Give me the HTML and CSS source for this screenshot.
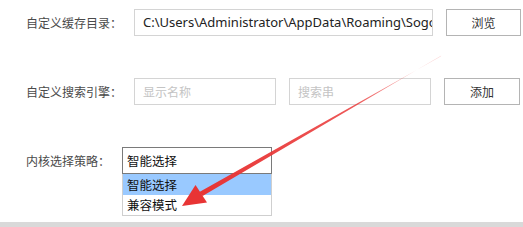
FILE: index.html
```html
<!DOCTYPE html>
<html lang="zh-CN">
<head>
    <meta charset="UTF-8">
    <meta name="viewport" content="width=device-width, initial-scale=1.0">
    <title>高级设置</title>
    <link rel="stylesheet" href="styles.css">
</head>
<body>
    <div class="panel">
        <div class="row row-cache">
            <label class="label label-cache">自定义缓存目录：</label>
            <div class="field field-path">C:\Users\Administrator\AppData\Roaming\Sogou</div>
            <button class="btn">浏览</button>
        </div>

        <div class="row row-search">
            <label class="label label-cache">自定义搜索引擎：</label>
            <div class="field field-half placeholder">显示名称</div>
            <div class="field field-half placeholder">搜索串</div>
            <button class="btn btn-add">添加</button>
        </div>

        <div class="row row-core">
            <label class="label label-core">内核选择策略：</label>
            <div class="select-wrap">
                <div class="select">智能选择</div>
                <ul class="options">
                    <li class="option selected">智能选择</li>
                    <li class="option">兼容模式</li>
                </ul>
            </div>
        </div>
    </div>

    <div class="footer-bar"></div>

    <svg class="arrow" width="523" height="227" viewBox="0 0 523 227">
        <defs>
            <linearGradient id="shaft" x1="441" y1="55" x2="200" y2="195" gradientUnits="userSpaceOnUse">
                <stop offset="0" stop-color="#f05a5a" stop-opacity="0.25"/>
                <stop offset="0.35" stop-color="#ea3b3b" stop-opacity="0.85"/>
                <stop offset="1" stop-color="#e83434"/>
            </linearGradient>
        </defs>
        <polygon points="441.3,55.4 440.7,56.4 199.4,191.9 202.6,196.1" fill="url(#shaft)"/>
        <polygon points="182,206 195.5,185 207,202.5" fill="#e83434"/>
    </svg>
</body>
</html>
```

FILE: styles.css
```css
body {
    margin: 0;
    width: 523px;
    height: 227px;
    background: #fff;
    font-family: "Noto Sans CJK SC", "Noto Sans", sans-serif;
    font-size: 12px;
    color: #333;
    position: relative;
    overflow: hidden;
}

.panel {
    padding: 9px 0 0 26px;
}

.row {
    display: flex;
    align-items: center;
    height: 27px;
}

.row-search {
    margin-top: 42px;
}

.row-core {
    margin-top: 42px;
    align-items: flex-start;
}

.label {
    flex: none;
    color: #4a4a4a;
    line-height: 27px;
}

.label-cache {
    width: 108px;
}

.label-core {
    width: 96px;
}

.field {
    box-sizing: border-box;
    height: 27px;
    border: 1px solid #d4d4d4;
    padding: 0 8px;
    line-height: 25px;
    color: #222;
    white-space: nowrap;
    overflow: hidden;
    font-family: "Noto Sans", "Noto Sans CJK SC", sans-serif;
    font-size: 13px;
}

.field-path {
    width: 299px;
}

.field-half {
    width: 142px;
    margin-right: 13px;
}

.placeholder {
    color: #c4c4c4;
    font-family: "Noto Sans CJK SC", sans-serif;
    font-size: 12px;
}

.btn {
    box-sizing: border-box;
    width: 75px;
    height: 27px;
    margin-left: 13px;
    border: 1px solid #b4b4b4;
    background: #fff;
    font-family: "Noto Sans CJK SC", sans-serif;
    font-size: 12px;
    color: #333;
    padding: 0;
}

.btn-add {
    width: 76px;
    margin-left: 0;
}

.select-wrap {
    position: relative;
    width: 150px;
}

.select {
    box-sizing: border-box;
    height: 27px;
    border: 1px solid #7a7a7a;
    padding: 0 4px;
    line-height: 25px;
    color: #111;
    font-size: 12.5px;
}

.options {
    position: absolute;
    top: 27px;
    left: 0;
    width: 150px;
    box-sizing: border-box;
    margin: 0;
    padding: 0;
    list-style: none;
    border: 1px solid #cfcfcf;
    border-top: none;
    background: #fff;
}

.option {
    height: 20px;
    line-height: 20px;
    padding: 0 4px;
    color: #111;
    font-size: 12.5px;
}

.option.selected {
    background: #99c9ff;
    height: 21px;
    line-height: 21px;
}

.footer-bar {
    position: absolute;
    left: 0;
    right: 0;
    top: 222px;
    height: 5px;
    background: #d9d9d9;
}

.arrow {
    position: absolute;
    left: 0;
    top: 0;
    pointer-events: none;
}
```
